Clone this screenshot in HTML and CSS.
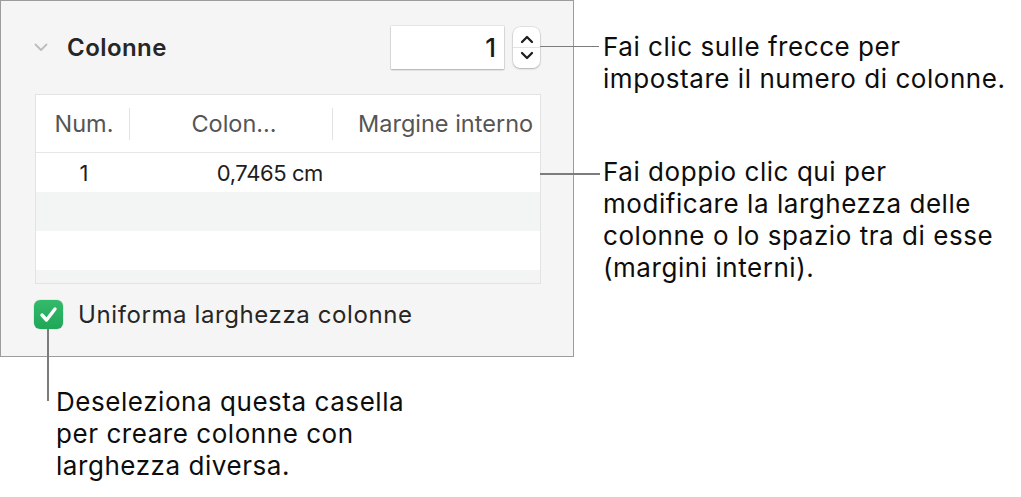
FILE: index.html
```html
<!DOCTYPE html>
<html lang="it">
<head>
<meta charset="utf-8">
<title>Colonne</title>
<link rel="stylesheet" href="styles.css">
</head>
<body>
<div class="page">
  <div class="left">
    <div class="panel">
      <div class="head">
        <svg class="chev" width="14" height="9" viewBox="0 0 14 9"><path d="M1.5 1.5 L7 7 L12.5 1.5" fill="none" stroke="#bdbdbd" stroke-width="1.8" stroke-linecap="round" stroke-linejoin="round"/></svg>
        <span class="title">Colonne</span>
        <div class="num">1</div>
        <div class="stepper">
          <svg class="arrow" width="14" height="9" viewBox="0 0 14 9"><path d="M2 7 L7 2 L12 7" fill="none" stroke="#1e1e1e" stroke-width="2.3" stroke-linecap="round" stroke-linejoin="round"/></svg>
          <div class="divider"></div>
          <svg class="arrow" width="14" height="9" viewBox="0 0 14 9"><path d="M2 2 L7 7 L12 2" fill="none" stroke="#1e1e1e" stroke-width="2.3" stroke-linecap="round" stroke-linejoin="round"/></svg>
        </div>
      </div>
      <div class="table">
        <div class="thead">
          <div class="th c1">Num.</div>
          <div class="th c2">Colon...</div>
          <div class="th c3">Margine interno</div>
        </div>
        <div class="row first">
          <div class="td c1">1</div>
          <div class="td c2">0,7465 cm</div>
          <div class="td c3"></div>
        </div>
        <div class="row alt"></div>
        <div class="row"></div>
        <div class="row alt short"></div>
      </div>
      <div class="check">
        <span class="box"><svg width="29" height="29" viewBox="0 0 29 29"><path d="M8 15 L12.5 20 L21 9" fill="none" stroke="#fff" stroke-width="3.4" stroke-linecap="round" stroke-linejoin="round"/></svg></span>
        <span class="label">Uniforma larghezza colonne</span>
      </div>
    </div>
    <p class="callout bottom">Deseleziona questa casella<br>per creare colonne con<br>larghezza diversa.</p>
  </div>
  <div class="right">
    <p class="callout c-one">Fai clic sulle frecce per<br>impostare il numero di colonne.</p>
    <p class="callout c-two">Fai doppio clic qui per<br>modificare la larghezza delle<br>colonne o lo spazio tra di esse<br>(margini interni).</p>
  </div>
</div>
</body>
</html>
```

FILE: styles.css
```css
* { box-sizing: border-box; }
html, body { margin: 0; padding: 0; background: #fff; }
body {
  font-family: "Inter", "Roboto", "Liberation Sans", sans-serif;
  color: #1d1d1d;
}
.page { display: flex; width: 1021px; height: 497px; }
.left { width: 574px; flex: none; display: flex; flex-direction: column; }
.panel {
  width: 574px;
  height: 357px;
  border: 1px solid #9c9c9c;
  background: #f5f5f5;
  padding: 24px 33px 0 33px;
  display: flex;
  flex-direction: column;
}
.head { display: flex; align-items: center; height: 44px; }
.chev { flex: none; }
.title {
  margin-left: 19px;
  font-size: 24px;
  font-weight: 600;
  letter-spacing: 0.45px;
  color: #262626;
  flex: 1;
}
.num {
  width: 113px;
  height: 43px;
  background: #fff;
  box-shadow: 0 0 0 0.5px rgba(0,0,0,0.12), 0 1px 1.5px rgba(0,0,0,0.25);
  font-size: 26px;
  font-weight: 500;
  text-align: right;
  padding-right: 8px;
  line-height: 43px;
  color: #1a1a1a;
}
.stepper {
  position: relative;
  margin-left: 9px;
  width: 27px;
  height: 41px;
  background: #fff;
  border-radius: 7px;
  box-shadow: 0 0 0 0.5px rgba(0,0,0,0.14), 0 1px 2px rgba(0,0,0,0.22);
  display: flex;
  flex-direction: column;
  align-items: center;
  justify-content: center;
  gap: 3px;
}
.stepper::after {
  content: "";
  position: absolute;
  left: 27px;
  top: 19px;
  width: 59px;
  height: 1.5px;
  background: #7c7c7c;
}
.divider { width: 27px; height: 1px; background: #e4e4e4; }
.arrow { display: block; }
.table {
  margin-top: 25px;
  width: 506px;
  margin-left: 1px;
  border: 1.5px solid #e3e3e3;
  background: #fff;
}
.thead { display: flex; height: 58px; align-items: center; border-bottom: 1.5px solid #e6e6e6; }
.th {
  font-size: 23.5px;
  color: #555;
  height: 32px;
  line-height: 32px;
  white-space: nowrap;
}
.c1 { width: 93px; text-align: center; }
.c2 { width: 203px; text-align: center; }
.c3 { flex: 1; padding-left: 25px; }
.th.c1 { padding-left: 3px; }
.th.c2, .th.c3 { border-left: 1.5px solid #e2e2e2; }
.th.c2 { padding-left: 6px; }
.row { height: 39px; display: flex; align-items: center; }
.row.alt { background: #f3f4f4; }
.row.short { height: 13px; }
.row.first { position: relative; }
.row.first::after {
  content: "";
  position: absolute;
  left: 504px;
  top: 20px;
  width: 60px;
  height: 1.5px;
  background: #7c7c7c;
}
.td { font-size: 22px; color: #1d1d1d; }
.td.c1 { padding-left: 3px; }
.td.c2 { text-align: right; padding-right: 9px; letter-spacing: -0.4px; }
.check { display: flex; align-items: center; margin-top: 16px; }
.box {
  position: relative;
  width: 29px;
  height: 29px;
  border-radius: 6px;
  background: linear-gradient(#33bb6b, #1fa657);
  box-shadow: 0 0 0 0.5px rgba(0,0,0,0.1);
  flex: none;
}
.box svg { display: block; }
.box::after {
  content: "";
  position: absolute;
  left: 13px;
  top: 29px;
  width: 1.5px;
  height: 72px;
  background: #7c7c7c;
}
.label { margin-left: 15px; font-size: 24px; letter-spacing: 0.6px; color: #262626; }
.callout {
  margin: 0;
  font-size: 26px;
  letter-spacing: 0.55px;
  line-height: 32px;
  color: #0d0d0d;
  white-space: nowrap;
}
.bottom { margin-top: 29px; padding-left: 56px; }
.right { padding-left: 29px; }
.c-one { margin-top: 31px; }
.c-two { margin-top: 61px; }
```
